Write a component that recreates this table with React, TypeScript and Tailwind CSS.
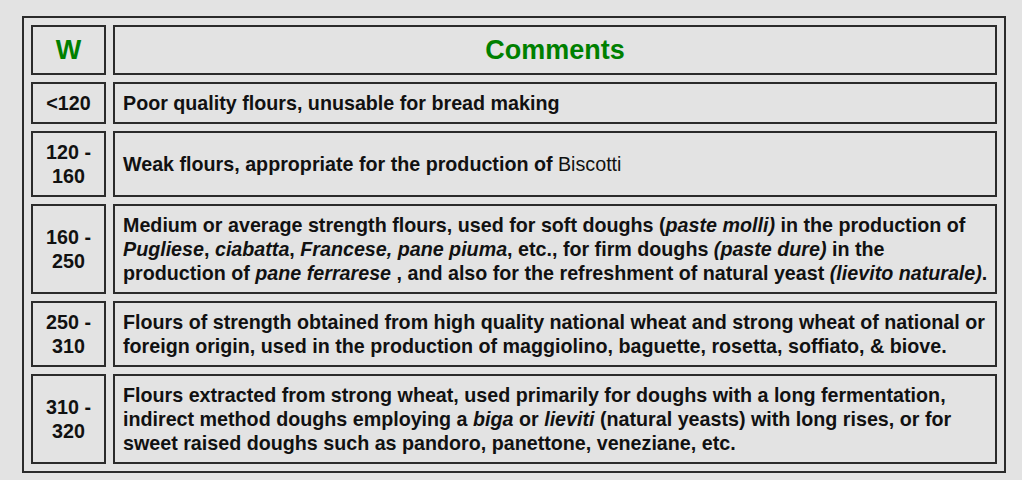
import type { ReactNode } from 'react';

const rows: { w: ReactNode; text: ReactNode }[] = [
  { w: '<120', text: 'Poor quality flours, unusable for bread making' },
  {
    w: (
      <>
        120 -<br />160
      </>
    ),
    text: (
      <>
        Weak flours, appropriate for the production of <span className="font-normal">Biscotti</span>
      </>
    ),
  },
  {
    w: (
      <>
        160 -<br />250
      </>
    ),
    text: (
      <>
        Medium or average strength flours, used for soft doughs (<i>paste molli)</i> in the production of{' '}
        <i>Pugliese</i>, <i>ciabatta</i>, <i>Francese, pane piuma</i>, etc., for firm doughs <i>(paste dure)</i> in the
        production of <i>pane ferrarese</i> , and also for the refreshment of natural yeast{' '}
        <i>(lievito naturale)</i>.
      </>
    ),
  },
  {
    w: (
      <>
        250 -<br />310
      </>
    ),
    text: 'Flours of strength obtained from high quality national wheat and strong wheat of national or foreign origin, used in the production of maggiolino, baguette, rosetta, soffiato, & biove.',
  },
  {
    w: (
      <>
        310 -<br />320
      </>
    ),
    text: (
      <>
        Flours extracted from strong wheat, used primarily for doughs with a long fermentation, indirect method
        doughs employing a <i>biga</i> or <i>lieviti</i> (natural yeasts) with long rises, or for sweet raised
        doughs such as pandoro, panettone, veneziane, etc.
      </>
    ),
  },
];

export default function App() {
  return (
    <div className="w-[1022px] h-[480px] bg-[#e3e3e3] pt-4 pl-[22px] font-['Liberation_Sans',Arial,sans-serif] text-[#111]">
      <table className="w-[984px] table-fixed border-2 border-[#2b2b2b] border-separate border-spacing-[7px]">
        <thead>
          <tr className="h-[50px]">
            <th className="w-[75px] border-2 border-[#2b2b2b] text-[27px] font-bold text-[#008000]">W</th>
            <th className="border-2 border-[#2b2b2b] text-[27px] font-bold text-[#008000]">Comments</th>
          </tr>
        </thead>
        <tbody>
          {rows.map((r, i) => (
            <tr key={i}>
              <td className="border-2 border-[#2b2b2b] text-center text-[19.7px] leading-6 font-bold py-[7px]">
                {r.w}
              </td>
              <td className="border-2 border-[#2b2b2b] pl-2 pr-1 py-[7px] text-[19.7px] leading-6 font-bold">
                {r.text}
              </td>
            </tr>
          ))}
        </tbody>
      </table>
    </div>
  );
}
